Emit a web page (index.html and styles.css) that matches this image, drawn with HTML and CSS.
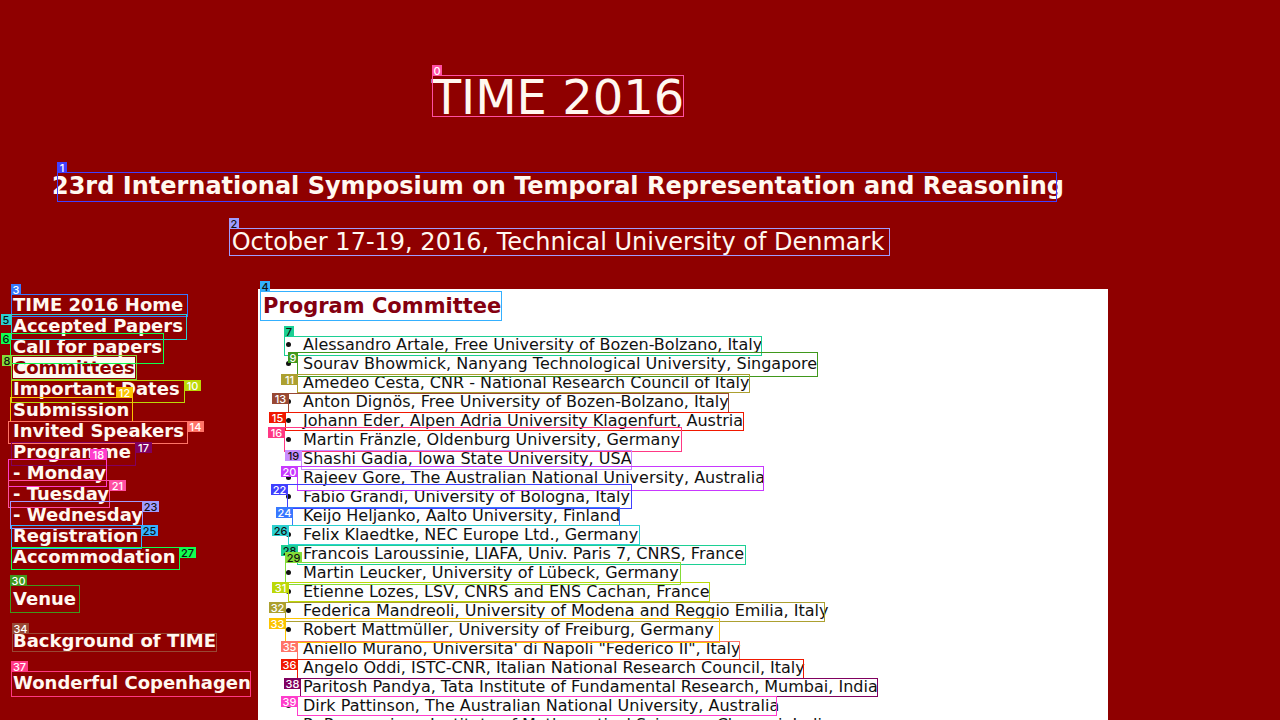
FILE: index.html
```html
<!DOCTYPE html>
<html lang="en">
<head>
<meta charset="utf-8">
<title>TIME 2016 - Program Committee</title>
<link rel="stylesheet" href="styles.css">
</head>
<body>
<div class="page">
  <header class="banner">
    <h1 class="banner-title">TIME 2016</h1>
    <p class="banner-name">23rd International Symposium on Temporal Representation and Reasoning</p>
    <p class="banner-date">October 17-19, 2016, Technical University of Denmark</p>
  </header>
  <div class="columns">
    <nav class="menu">
      <ul class="menu-list">
        <li><a href="#">TIME 2016 Home</a></li>
        <li><a href="#">Accepted Papers</a></li>
        <li><a href="#">Call for papers</a></li>
        <li><a href="#" class="current" aria-current="page">Committees</a></li>
        <li><a href="#">Important Dates</a></li>
        <li><a href="#">Submission</a></li>
        <li><a href="#">Invited Speakers</a></li>
        <li><a href="#">Programme</a></li>
        <li><a href="#">- Monday</a></li>
        <li><a href="#">- Tuesday</a></li>
        <li><a href="#">- Wednesday</a></li>
        <li><a href="#">Registration</a></li>
        <li><a href="#">Accommodation</a></li>
        <li class="spaced"><a href="#">Venue</a></li>
        <li class="spaced"><a href="#">Background of TIME</a></li>
        <li class="spaced"><a href="#">Wonderful Copenhagen</a></li>
      </ul>
    </nav>
    <main class="content">
      <h2 class="content-title">Program Committee</h2>
      <ul class="members">
        <li>Alessandro Artale, Free University of Bozen-Bolzano, Italy</li>
        <li>Sourav Bhowmick, Nanyang Technological University, Singapore</li>
        <li>Amedeo Cesta, CNR - National Research Council of Italy</li>
        <li>Anton Dignös, Free University of Bozen-Bolzano, Italy</li>
        <li>Johann Eder, Alpen Adria University Klagenfurt, Austria</li>
        <li>Martin Fränzle, Oldenburg University, Germany</li>
        <li>Shashi Gadia, Iowa State University, USA</li>
        <li>Rajeev Gore, The Australian National University, Australia</li>
        <li>Fabio Grandi, University of Bologna, Italy</li>
        <li>Keijo Heljanko, Aalto University, Finland</li>
        <li>Felix Klaedtke, NEC Europe Ltd., Germany</li>
        <li>Francois Laroussinie, LIAFA, Univ. Paris 7, CNRS, France</li>
        <li>Martin Leucker, University of Lübeck, Germany</li>
        <li>Etienne Lozes, LSV, CNRS and ENS Cachan, France</li>
        <li>Federica Mandreoli, University of Modena and Reggio Emilia, Italy</li>
        <li>Robert Mattmüller, University of Freiburg, Germany</li>
        <li>Aniello Murano, Universita' di Napoli "Federico II", Italy</li>
        <li>Angelo Oddi, ISTC-CNR, Italian National Research Council, Italy</li>
        <li>Paritosh Pandya, Tata Institute of Fundamental Research, Mumbai, India</li>
        <li>Dirk Pattinson, The Australian National University, Australia</li>
        <li>R. Ramanujam, Institute of Mathematical Sciences, Chennai, India</li>
      </ul>
    </main>
  </div>
</div>
<div class="marks" id="marks"></div>
<script src="marks.js"></script>
</body>
</html>
```
FILE: styles.css
```css
body {
  margin: 0;
  padding: 8px;
  background: #8f0000;
  color: #fff8f0;
  font-family: "DejaVu Sans", sans-serif;
  font-size: 16px;
  line-height: 19px;
}

.page {
  max-width: 1100px;
}

.banner {
  padding-top: 60px;
  text-align: center;
}

.banner-title {
  margin: 0;
  font-size: 48px;
  font-weight: normal;
  line-height: 58px;
}

.banner-name {
  margin: 46px 0 0;
  font-size: 24px;
  font-weight: bold;
  line-height: 28px;
}

.banner-date {
  margin: 28px 0 0;
  font-size: 24px;
  line-height: 28px;
}

.columns {
  display: flex;
  margin-top: 33px;
}

.menu {
  flex: 0 0 250px;
  box-sizing: border-box;
  padding: 5px;
}

.menu-list {
  margin: 0;
  padding: 0;
  list-style: none;
  font-size: 18px;
  font-weight: bold;
  line-height: 21px;
  white-space: nowrap;
}

.menu-list a {
  color: #fff8f0;
  text-decoration: none;
}

.menu-list .current {
  background: #fff8f0;
  color: #8f0000;
}

.spaced {
  margin-top: 21px;
}

.content {
  flex: 1;
  padding: 4px 5px 40px;
  background: #fff;
  color: #111;
}

.content-title {
  margin: 0;
  color: #840010;
  font-size: 21px;
  line-height: 26px;
}

.members {
  margin: 16px 0 0;
  padding-left: 40px;
}

.marks {
  position: absolute;
  top: 0;
  left: 0;
  pointer-events: none;
}

.mark,
.tag {
  position: absolute;
  box-sizing: border-box;
}

.mark {
  border: 1px solid;
}

.tag {
  width: 10px;
  height: 11px;
  color: #fff;
  font-family: Inter, sans-serif;
  font-size: 11px;
  font-weight: 500;
  line-height: 12px;
  text-align: center;
}

.tag-wide {
  width: 17px;
}

.tag-dark {
  color: #111;
}
```
FILE: marks.js
```js
// number, left, top, right, bottom, tag left, tag top, colour, dark text
const marks = [
  [0, 432, 75, 684, 117, 432, 65, "#ff4fa3"],
  [1, 57, 172, 1057, 202, 57, 162, "#4040ff"],
  [2, 229, 228, 890, 256, 229, 218, "#a09cff", 1],
  [3, 11, 294, 188, 317, 11, 284, "#3878ff"],
  [4, 260, 291, 502, 321, 260, 281, "#34b0ff", 1],
  [5, 11, 314, 187, 340, 1, 314, "#2cd0d0", 1],
  [6, 10, 333, 164, 364, 1, 333, "#10ff50", 1],
  [7, 284, 336, 762, 356, 284, 326, "#1cd094", 1],
  [8, 11, 355, 137, 380, 2, 355, "#84dc38", 1],
  [9, 297, 352, 818, 377, 288, 352, "#40981c"],
  [10, 11, 380, 185, 403, 184, 380, "#bcd808"],
  [11, 297, 374, 750, 393, 281, 374, "#aca030"],
  [12, 10, 397, 133, 422, 116, 387, "#fcc400"],
  [13, 288, 393, 729, 413, 272, 393, "#984834"],
  [14, 8, 421, 188, 444, 187, 421, "#ff7468"],
  [15, 285, 412, 744, 431, 269, 412, "#f01800"],
  [16, 284, 427, 682, 452, 268, 427, "#ff3884"],
  [17, 11, 442, 136, 466, 135, 442, "#800060"],
  [18, 8, 459, 107, 487, 90, 449, "#ff3ccc"],
  [19, 301, 450, 632, 470, 285, 450, "#c88cff", 1],
  [20, 297, 466, 764, 491, 281, 466, "#c838ff"],
  [21, 8, 480, 110, 508, 109, 480, "#ff4fa3"],
  [22, 287, 484, 632, 509, 271, 484, "#4040ff"],
  [23, 10, 501, 143, 529, 142, 501, "#a09cff", 1],
  [24, 292, 507, 620, 526, 276, 507, "#3878ff"],
  [25, 11, 525, 142, 549, 141, 525, "#34b0ff", 1],
  [26, 288, 525, 640, 545, 272, 525, "#2cd0d0", 1],
  [27, 11, 547, 180, 570, 179, 547, "#10ff50", 1],
  [28, 297, 545, 746, 565, 281, 545, "#1cd094", 1],
  [29, 285, 562, 681, 585, 285, 552, "#84dc38", 1],
  [30, 10, 585, 80, 613, 10, 575, "#40981c"],
  [31, 288, 582, 710, 602, 272, 582, "#bcd808"],
  [32, 285, 602, 825, 622, 269, 602, "#aca030"],
  [33, 285, 618, 720, 643, 269, 618, "#fcc400"],
  [34, 12, 633, 217, 652, 12, 623, "#984834"],
  [35, 297, 641, 740, 660, 281, 641, "#ff7468"],
  [36, 297, 659, 804, 679, 281, 659, "#f01800"],
  [37, 11, 671, 251, 697, 11, 661, "#ff3884"],
  [38, 300, 678, 878, 697, 284, 678, "#800060"],
  [39, 297, 696, 777, 716, 281, 696, "#ff3ccc"]
];

const layer = document.getElementById("marks");

for (const [number, left, top, right, bottom, tagLeft, tagTop, color, dark] of marks) {
  const box = document.createElement("div");
  box.className = "mark";
  box.style.left = left + "px";
  box.style.top = top + "px";
  box.style.width = right - left + "px";
  box.style.height = bottom - top + "px";
  box.style.borderColor = color;

  const tag = document.createElement("span");
  tag.className = "tag" + (number > 9 ? " tag-wide" : "") + (dark ? " tag-dark" : "");
  tag.textContent = number;
  tag.style.left = tagLeft + "px";
  tag.style.top = tagTop + "px";
  tag.style.backgroundColor = color;

  layer.append(box, tag);
}
```
